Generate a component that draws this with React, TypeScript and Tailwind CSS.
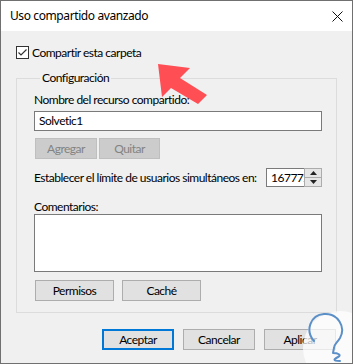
import React from 'react';

const titleFont = { fontFamily: '"Segoe UI", "Noto Sans", sans-serif', letterSpacing: '-0.4px' };
const font = { fontFamily: '"Segoe UI", Lato, sans-serif', letterSpacing: '-0.5px' };

function WinButton({ label, width, disabled, primary }: { label: string; width: string; disabled?: boolean; primary?: boolean }) {
  const base = 'h-[21px] flex items-center justify-center text-[12px] leading-none';
  if (disabled) {
    return <div className={`${base} ${width} bg-[#cccccc] border border-[#bfbfbf] text-[#838383]`}>{label}</div>;
  }
  if (primary) {
    return <div className={`${base} ${width} bg-[#e1e1e1] border-2 border-[#0078d7] text-black`}>{label}</div>;
  }
  return <div className={`${base} ${width} bg-[#e1e1e1] border border-[#adadad] text-black`}>{label}</div>;
}

export default function App() {
  return (
    <div style={font} className="relative w-[353px] h-[364px] overflow-hidden bg-[#f0f0f0] border border-[#707070] flex flex-col text-[12px] text-black">
      {/* Title bar */}
      <div className="h-[30px] bg-white flex items-center justify-between pl-[9px] pr-[9px] shrink-0">
        <span style={titleFont} className="text-[12px] leading-none">Uso compartido avanzado</span>
        <svg width="11" height="11" viewBox="0 0 11 11">
          <path d="M0.5 0.5 L10.5 10.5 M10.5 0.5 L0.5 10.5" stroke="#111" strokeWidth="1" />
        </svg>
      </div>

      <div className="px-[15px] flex flex-col">
        {/* Checkbox */}
        <div className="flex items-center mt-[15px] h-[13px]">
          <div className="w-[13px] h-[13px] bg-white border border-[#333333] flex items-center justify-center">
            <svg width="11" height="11" viewBox="0 0 11 11">
              <path d="M1.5 5.5 L4 8 L9.5 2.5" stroke="#333" strokeWidth="1.2" fill="none" />
            </svg>
          </div>
          <span className="ml-[3px] leading-none">Compartir esta carpeta</span>
        </div>

        {/* Group box */}
        <fieldset className="mt-[11px] border border-[#dcdcdc] pl-[17px] pr-[14px] pb-[11px] min-w-0">
          <legend className="ml-[6px] px-[2px] leading-[16px]">Configuración</legend>

          <div className="mt-[6px] leading-[16px]">Nombre del recurso compartido:</div>
          <div className="mt-[3px] h-[20px] bg-white border border-[#7a7a7a] flex items-center pl-[4px] leading-none">
            Solvetic1
          </div>

          <div className="mt-[7px] pl-[1px] flex gap-[2px]">
            <WinButton label="Agregar" width="w-[62px]" disabled />
            <WinButton label="Quitar" width="w-[61px]" disabled />
          </div>

          <div className="mt-[9px] flex items-center justify-between">
            <span className="leading-[16px] whitespace-nowrap">Establecer el límite de usuarios simultáneos en:</span>
            <div className="flex h-[19px] shrink-0">
              <input
                readOnly
                value="16777216"
                style={font}
                className="w-[38px] h-full bg-white border border-[#7a7a7a] border-r-0 pl-[4px] text-[12px] text-black outline-none"
              />
              <div className="w-[18px] h-full border border-[#acacac] flex flex-col bg-[#e6e6e6]">
                <div className="flex-1 flex items-center justify-center border-b border-[#acacac]">
                  <svg width="7" height="4" viewBox="0 0 7 4"><path d="M3.5 0 L7 4 L0 4 Z" fill="#222" /></svg>
                </div>
                <div className="flex-1 flex items-center justify-center">
                  <svg width="7" height="4" viewBox="0 0 7 4"><path d="M0 0 L7 0 L3.5 4 Z" fill="#222" /></svg>
                </div>
              </div>
            </div>
          </div>

          <div className="mt-[12px] leading-[15px]">Comentarios:</div>
          <div className="h-[58px] bg-white border border-[#7a7a7a]" />

          <div className="mt-[8px] pl-[1px] flex gap-[8px]">
            <WinButton label="Permisos" width="w-[79px]" />
            <WinButton label="Caché" width="w-[79px]" />
          </div>
        </fieldset>

        {/* Bottom buttons */}
        <div className="mt-[16px] flex justify-end gap-[9px] pr-[1px]">
          <WinButton label="Aceptar" width="w-[72px]" primary />
          <WinButton label="Cancelar" width="w-[72px]" />
          <WinButton label="Aplicar" width="w-[72px]" />
        </div>
      </div>

      {/* Red arrow overlay */}
      <svg className="absolute left-0 top-0 pointer-events-none" width="353" height="364" viewBox="0 0 353 364">
        <polygon points="157,63 189,67 179,77 206,94 197,103 170,87 161,96" fill="#ff4f55" />
      </svg>

      {/* Watermark logo */}
      <svg className="absolute left-[301px] top-[309px] pointer-events-none" width="76" height="76" viewBox="0 0 76 76">
        <circle cx="38" cy="38" r="37" fill="rgba(255,255,255,0.72)" />
        <path
          d="M12 31 C3 21 8 5 22 4 C36 3 44 17 38 28 C35 33 32 34 32 38 L31 43 C36 43 40 45 36 47 C32 49 30 51 38 51"
          stroke="#5b8fc8"
          strokeWidth="2"
          fill="none"
          strokeLinecap="round"
          strokeLinejoin="round"
        />
      </svg>
    </div>
  );
}
